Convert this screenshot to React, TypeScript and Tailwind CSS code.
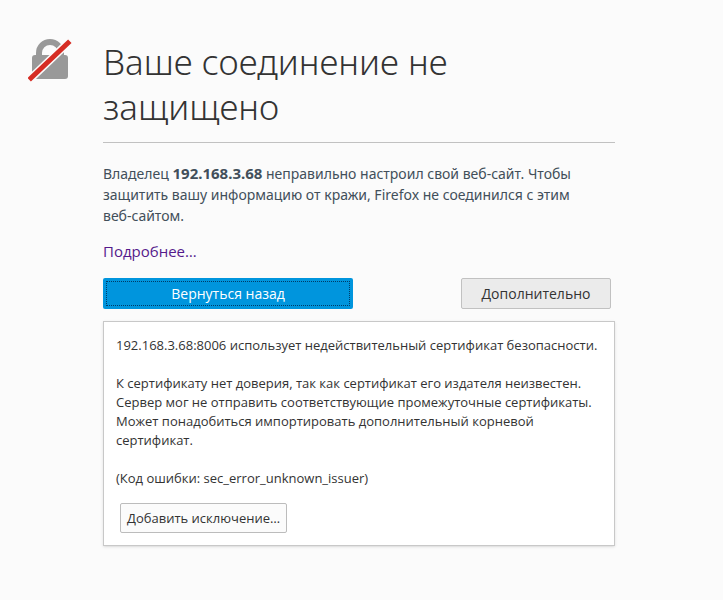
export default function App() {
  return (
    <div className="min-h-screen bg-[#fbfbfb] font-['Open_Sans','Noto_Sans',sans-serif] text-[#333]">
      <main className="flex pl-7 pr-[108px] pt-[39px]">
        <svg viewBox="0 0 44 44" className="h-11 w-11 shrink-0" aria-hidden="true">
          <path d="M11 18v-4a11 11 0 0 1 22 0v4" fill="none" stroke="#999" strokeWidth="6" />
          <rect x="4" y="16" width="36" height="24" rx="3" fill="#999" />
          <path d="M1 41 43 1" stroke="#fbfbfb" strokeWidth="8" />
          <path d="M3 39 40 4" stroke="#d62d24" strokeWidth="5" strokeLinecap="square" />
        </svg>
        <div className="ml-[31px] min-w-0 flex-1">
          <h1 className="border-b border-[#c1c1c1] pb-[13px] font-['Noto_Sans','Open_Sans',sans-serif] text-[35px] font-light leading-[45px]">
            Ваше соединение не защищено
          </h1>
          <p className="mt-5 font-['Noto_Sans','Open_Sans',sans-serif] text-[14px] leading-[21px] text-[#424f5a]">
            Владелец <b className="text-[15px]">192.168.3.68</b> неправильно настроил свой веб-сайт. Чтобы защитить вашу информацию от кражи, Firefox не соединился с этим{" "}
            <span className="whitespace-nowrap">веб-сайтом.</span>
          </p>
          <a href="#" className="mt-[15px] block w-fit text-[15px] leading-[21px] text-[#551a8b]">Подробнее…</a>
          <div className="mt-4 flex justify-between pr-1">
            <button className="h-[31px] w-[250px] rounded-xs bg-[#0095dd] p-[3px] text-[14px] text-white">
              <span className="flex h-full items-center justify-center border border-dotted border-[#003c66]">Вернуться назад</span>
            </button>
            <button className="h-[31px] w-[150px] rounded-xs border border-[#c1c1c1] bg-[#ebebeb] text-[14px]">Дополнительно</button>
          </div>
          <section className="mt-3 border border-[#c8c8c8] bg-white px-3 pb-3 pt-[14px] text-[13px] leading-[19px] shadow-sm">
            <p>192.168.3.68:8006 использует недействительный сертификат безопасности.</p>
            <p className="mt-[19px]">
              К сертификату нет доверия, так как сертификат его издателя неизвестен. Сервер мог не отправить соответствующие промежуточные сертификаты. Может понадобиться импортировать дополнительный корневой сертификат.
            </p>
            <p className="mt-[19px]">(Код ошибки: sec_error_unknown_issuer)</p>
            <button className="ml-1 mt-[15px] block h-[30px] rounded-xs border border-[#bcbcbc] bg-[#fbfbfb] px-[6px]">Добавить исключение…</button>
          </section>
        </div>
      </main>
    </div>
  );
}
